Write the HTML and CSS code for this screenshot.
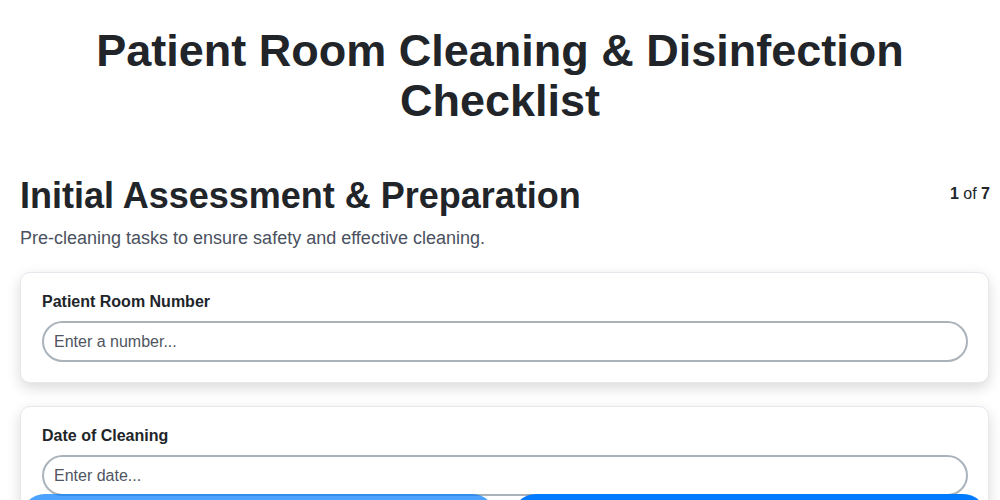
FILE: index.html
```html
<!DOCTYPE html>
<html lang="en">
<head>
<meta charset="utf-8">
<title>Patient Room Cleaning &amp; Disinfection Checklist</title>
<link rel="stylesheet" href="styles.css">
</head>
<body>
<main class="page">
  <h1 class="title">Patient Room Cleaning &amp; Disinfection Checklist</h1>
  <section class="step">
    <div class="step-head">
      <h2 class="step-title">Initial Assessment &amp; Preparation</h2>
      <div class="step-count"><b>1</b> of <b>7</b></div>
    </div>
    <p class="step-desc">Pre-cleaning tasks to ensure safety and effective cleaning.</p>
    <div class="card">
      <label class="field-label" for="room">Patient Room Number</label>
      <input class="field-input" id="room" type="text" placeholder="Enter a number...">
    </div>
    <div class="card">
      <label class="field-label" for="date">Date of Cleaning</label>
      <input class="field-input" id="date" type="text" placeholder="Enter date...">
    </div>
  </section>
</main>
<nav class="footer">
  <button class="btn btn-prev" type="button" aria-label="Previous"></button>
  <button class="btn btn-next" type="button" aria-label="Next"></button>
</nav>
</body>
</html>
```
FILE: styles.css
```css
* { box-sizing: border-box; }
html, body { margin: 0; padding: 0; background: #fff; }
body {
  font-family: "Liberation Sans", Arial, sans-serif;
  color: #212529;
  overflow: hidden;
}
.page {
  padding: 0 11px 100px 20px;
}
.title {
  margin: 0 -11px 0 -20px;
  padding-top: 26px;
  font-size: 45px;
  line-height: 50px;
  font-weight: 700;
  text-align: center;
  color: #212529;
}
.step { margin-top: 48px; }
.step-head {
  display: flex;
  justify-content: space-between;
  align-items: center;
}
.step-title {
  margin: 0;
  font-size: 36px;
  line-height: 44px;
  font-weight: 700;
  color: #212529;
}
.step-count {
  font-size: 16px;
  color: #212529;
  margin-right: -1px;
  margin-top: -4px;
}
.step-count b { font-weight: 700; }
.step-desc {
  margin: 8px 0 22px;
  font-size: 18px;
  line-height: 24px;
  color: #4a5160;
}
.card {
  background: #fff;
  border: 1px solid #e6e8ee;
  border-radius: 10px;
  padding: 19px 20px 20px 21px;
  margin-bottom: 23px;
  box-shadow: 0 5px 14px rgba(0, 0, 0, 0.15);
}
.field-label {
  display: block;
  font-size: 16px;
  line-height: 20px;
  font-weight: 700;
  margin-bottom: 9px;
  color: #212529;
}
.field-input {
  display: block;
  width: 100%;
  height: 41px;
  border: 2px solid #aab2ba;
  border-radius: 21px;
  padding: 0 10px;
  font-family: "Liberation Sans", Arial, sans-serif;
  font-size: 16px;
  color: #212529;
  background: #fff;
  outline: none;
}
.field-input::placeholder { color: #4f5561; opacity: 1; }
.footer {
  position: fixed;
  left: 21px;
  right: 13px;
  bottom: -42px;
  display: flex;
  gap: 16px;
}
.btn {
  flex: 1;
  height: 48px;
  border: none;
  border-radius: 24px;
  color: #fff;
}
.btn-prev { background: #007bff; opacity: 0.7; }
.btn-next { background: #007bff; }
```
